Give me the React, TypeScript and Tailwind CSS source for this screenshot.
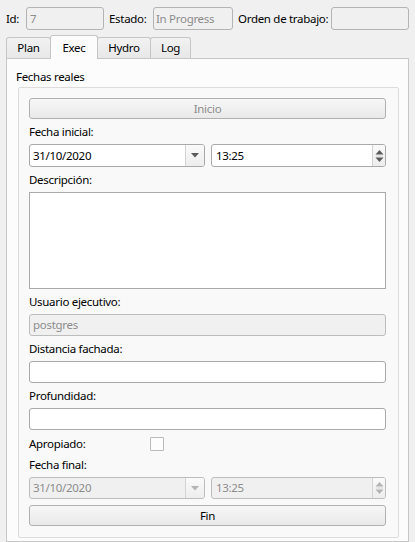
import React from "react";

const font = { fontFamily: '"Noto Sans", "Open Sans", sans-serif' };

function DownArrow({ dim }: { dim?: boolean }) {
  return (
    <svg width="8" height="5" viewBox="0 0 8 5">
      <path d="M0 0 H8 L4 4.5 Z" fill={dim ? "#b4b4b4" : "#5a5a5a"} />
    </svg>
  );
}

function SpinArrows({ dim }: { dim?: boolean }) {
  const c = dim ? "#b4b4b4" : "#5a5a5a";
  return (
    <svg width="9" height="14" viewBox="0 0 9 14">
      <path d="M0.5 5.5 L4.5 1 L8.5 5.5 Z" fill={c} />
      <path d="M0.5 8.5 L4.5 13 L8.5 8.5 Z" fill={c} />
      <line x1="1" y1="7" x2="8" y2="7" stroke="#d6d6d6" strokeWidth="1" />
    </svg>
  );
}

function DateTimeRow({ disabled }: { disabled?: boolean }) {
  const box = disabled
    ? "bg-[#f0f0f0] border-[#bdbdbd] text-[#8c8c8c]"
    : "bg-white border-[#a9a9a9] text-black";
  return (
    <div className={`flex gap-[6px] ${disabled ? "h-[22px]" : "h-[23px]"}`}>
      <div className={`flex w-[176px] border rounded-[3px] ${box}`}>
        <div className="flex-1 flex items-center pl-[3px]">31/10/2020</div>
        <div className="w-[19px] flex items-center justify-center border-l border-[#d4d4d4] bg-gradient-to-b from-[#fafafa] to-[#ededed] rounded-r-[2px]">
          <DownArrow dim={disabled} />
        </div>
      </div>
      <div className={`flex w-[175px] border rounded-[3px] ${box}`}>
        <div className="flex-1 flex items-center pl-[4px]">13:25</div>
        <div className="w-[13px] flex items-center justify-center border-l border-[#d4d4d4] bg-gradient-to-b from-[#fafafa] to-[#ededed] rounded-r-[2px]">
          <SpinArrows dim={disabled} />
        </div>
      </div>
    </div>
  );
}

function Label({ text }: { text: string }) {
  return <div className="h-[15px] flex items-center leading-none whitespace-nowrap">{text}</div>;
}

function TextInput({ value, disabled }: { value?: string; disabled?: boolean }) {
  return (
    <div
      className={`h-[22px] border rounded-[3px] flex items-center pl-[3px] ${
        disabled
          ? "bg-[#f0f0f0] border-[#bdbdbd] text-[#8c8c8c]"
          : "bg-white border-[#a9a9a9]"
      }`}
    >
      {value}
    </div>
  );
}

function Button({ text, dim }: { text: string; dim?: boolean }) {
  return (
    <div
      className={`h-[21px] border border-[#b0b0b0] rounded-[3px] bg-gradient-to-b from-[#f7f7f7] to-[#e9e9e9] flex items-center justify-center ${
        dim ? "text-[#8c8c8c]" : "text-black"
      }`}
    >
      {text}
    </div>
  );
}

export default function App() {
  const tabBase = "-ml-px first:ml-0 border border-b-0 border-[#c6c6c6] rounded-t-[3px] flex items-center justify-center";
  return (
    <div
      className="w-[415px] h-[542px] bg-[#f0f0f0] text-[11.5px] tracking-[-0.3px] text-black overflow-hidden"
      style={font}
    >
      {/* Top row */}
      <div className="flex items-center pl-[6px] pt-[7px] h-[30px]">
        <span className="w-[20px]">Id:</span>
        <div className="w-[78px] h-[23px] border border-[#b4b4b4] rounded-[3px] flex items-center pl-[3px] text-[#8c8c8c]">
          7
        </div>
        <span className="ml-[5px] w-[44px]">Estado:</span>
        <div className="w-[80px] h-[23px] border border-[#b4b4b4] rounded-[3px] flex items-center pl-[2px] text-[#8c8c8c] whitespace-nowrap overflow-hidden">
          In Progress
        </div>
        <span className="ml-[5px] w-[93px] whitespace-nowrap">Orden de trabajo:</span>
        <div className="w-[78px] h-[23px] border border-[#b4b4b4] rounded-[3px]" />
      </div>

      {/* Tabs */}
      <div className="flex items-end h-[23px] mt-[5px] pl-[6px]">
        <div className={`${tabBase} w-[45px] h-[21px] bg-gradient-to-b from-[#f2f2f2] to-[#e8e8e8]`}>Plan</div>
        <div className={`${tabBase} w-[48px] h-[24px] -mb-px relative z-10 bg-[#fcfcfc]`}>Exec</div>
        <div className={`${tabBase} w-[54px] h-[21px] bg-gradient-to-b from-[#f2f2f2] to-[#e8e8e8]`}>Hydro</div>
        <div className={`${tabBase} w-[41px] h-[21px] bg-gradient-to-b from-[#f2f2f2] to-[#e8e8e8]`}>Log</div>
      </div>

      {/* Pane */}
      <div className="ml-[6px] w-[403px] h-[484px] border border-[#c6c6c6] bg-[#fcfcfc] pt-[10px]">
        <div className="pl-[9px] h-[16px] flex items-center">Fechas reales</div>
        <div className="mt-[2px] ml-[11px] w-[381px] h-[451px] border border-[#dcdcdc] rounded-[2px] bg-[#f9f9f9] pl-[10px] pt-[10px]">
          <div className="w-[357px] flex flex-col gap-[5px]">
            <Button text="Inicio" dim />
            <Label text="Fecha inicial:" />
            <DateTimeRow />
            <Label text="Descripción:" />
            <div className="h-[97px] bg-white border border-[#a9a9a9]" />
            <Label text="Usuario ejecutivo:" />
            <TextInput value="postgres" disabled />
            <Label text="Distancia fachada:" />
            <TextInput />
            <Label text="Profundidad:" />
            <TextInput />
            <div className="h-[17px] flex items-center">
              <span className="w-[121px] leading-none">Apropiado:</span>
              <div className="w-[14px] h-[14px] border border-[#bababa] bg-[#fdfdfd] rounded-[1px]" />
            </div>
            <Label text="Fecha final:" />
            <DateTimeRow disabled />
            <div className="mt-[1px]">
              <Button text="Fin" />
            </div>
          </div>
        </div>
      </div>
    </div>
  );
}
